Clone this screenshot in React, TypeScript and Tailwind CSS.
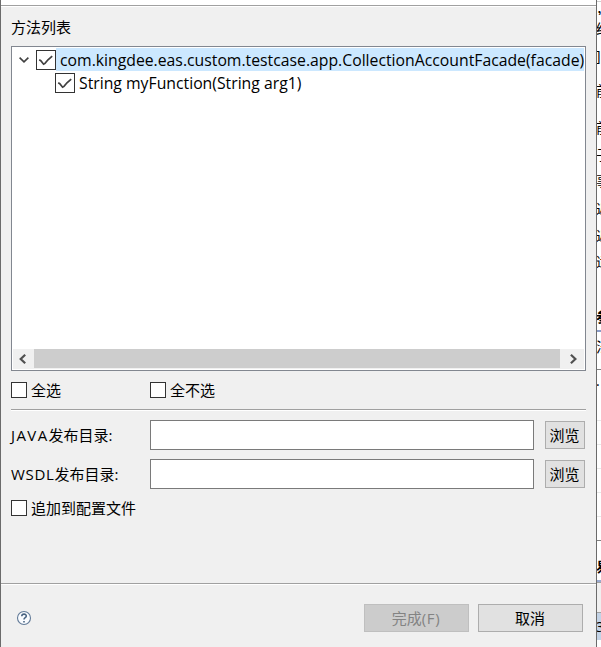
import { ReactNode } from 'react'

// what still shows of the editor window behind the dialog
const behindRows = [
    { box: "h-[14px] border-t border-[#d0d0d0] mt-px", text: "，" },
    { box: "h-[28px]", text: "结" },
    { box: "h-[26px]", text: "]" },
    { box: "h-[44px]", text: "前" },
    { box: "h-[30px]", text: "前" },
    { box: "h-[24px]", text: "子" },
    { box: "h-[28px]", text: "事" },
    { box: "h-[27px]", text: "返" },
    { box: "h-[27px]", text: "返" },
    { box: "h-[26px]", text: "适" },
    { box: "h-[57px] items-end pb-1.5 font-bold border-b-2 border-[#8a9cc8]", text: "参" },
    { box: "h-[38px] pb-2 border-b border-[#808080]", text: "法" },
    { box: "h-[51px] pb-5 border-b border-[#e8e8e8]", text: "·" },
    { box: "h-[24px] border-b border-[#e8e8e8]", text: "" },
    { box: "h-[24px] border-b border-[#e8e8e8]", text: "" },
    { box: "h-[24px] border-b border-[#e8e8e8]", text: "" },
    { box: "h-[24px] border-b border-[#e8e8e8]", text: "" },
    { box: "h-[24px] border-b border-[#808080]", text: "" },
    { box: "h-[41px] pt-3 font-bold border-b-2 border-[#9aaad0]", text: "易" },
    { box: "h-[31px] bg-[#f0f0f0] border-y border-[#a0a0a0]", text: "" },
    { box: "h-[27px] bg-[#c3d3e6]", text: "3" },
];

const CheckBox = ({ checked = false, large = false }: { checked?: boolean; large?: boolean }) => (
    <span className={`flex shrink-0 items-center justify-center border border-[#333] bg-white ${large ? "size-5" : "size-4"}`}>
        {checked && (
            <svg viewBox="0 0 18 18" className="size-[18px]" fill="none" stroke="#404040" strokeWidth="1.7">
                <path d="M2.2 8.8 3.8 9.7 6.6 13.2 8 12.4 11 8.8 15.2 5.2" />
            </svg>
        )}
    </span>
);

const Divider = ({ className = "" }: { className?: string }) => (
    <div className={`h-0.5 shrink-0 border-t border-[#a0a0a0] bg-white ${className}`} />
);

const PathField = ({ label }: { label: ReactNode }) => (
    <div className="flex h-[30px] items-center">
        <label className="w-[139px]">{label}</label>
        <input className="h-[30px] w-[384px] border border-[#7a7a7a] bg-white px-1 outline-none" />
        <button className="ml-[11px] h-7 w-10 border border-[#adadad] bg-[#e1e1e1] pr-px">浏览</button>
    </div>
);

const App = () => {
    return (
        <div className="flex h-[647px] w-[601px] overflow-hidden bg-white font-['Open_Sans','Noto_Sans_CJK_SC',sans-serif] text-[15px] leading-5 text-black">
            {/* DIALOG */}
            <div className="flex w-[597px] shrink-0 flex-col border-x border-[#6b6b6b] bg-[#f0f0f0]">
                <div className="h-[5px] bg-white" />
                <Divider />

                <div className="px-2.5">
                    <h1 className="mt-2.5 h-[29px]">方法列表</h1>

                    {/* Method tree */}
                    <div className="flex h-[325px] w-[575px] flex-col border border-[#828790] bg-white p-px text-[15.77px]">
                        <div className="flex h-[23px] items-center">
                            <svg viewBox="0 0 10 6" className="ml-1.5 mr-[7px] h-1.5 w-2.5 shrink-0" fill="none" stroke="#404040" strokeWidth="1.6">
                                <path d="M.6.7 5 4.9 9.4.7" />
                            </svg>
                            <CheckBox checked large />
                            <span className="flex h-full flex-1 items-center overflow-hidden whitespace-nowrap bg-[#cce8ff] pl-1">
                                com.kingdee.eas.custom.testcase.app.CollectionAccountFacade(facade)
                            </span>
                        </div>
                        <div className="flex h-[23px] items-center gap-1 pl-[42px]">
                            <CheckBox checked large />
                            <span>String myFunction(String arg1)</span>
                        </div>

                        {/* Scrollbar */}
                        <div className="mt-auto flex h-5 items-center bg-[#f0f0f0]">
                            <svg viewBox="0 0 21 19" className="h-[19px] w-[21px]" fill="none" stroke="#505050" strokeWidth="2.2">
                                <path d="M12.2 4.7 7.7 9 12.2 13.3" />
                            </svg>
                            <div className="mb-px h-[19px] flex-1 bg-[#cdcdcd]" />
                            <svg viewBox="0 0 24 19" className="h-[19px] w-6" fill="none" stroke="#505050" strokeWidth="2.2">
                                <path d="M10.9 4.7 15.4 9 10.9 13.3" />
                            </svg>
                        </div>
                    </div>

                    <div className="mt-[11px] flex h-4 items-center">
                        <label className="flex w-[139px] items-center gap-1"><CheckBox />全选</label>
                        <label className="flex items-center gap-1"><CheckBox />全不选</label>
                    </div>
                    <Divider className="mt-[11px] w-[575px]" />

                    {/* Output folders */}
                    <div className="mt-[9px] flex flex-col gap-[9px]">
                        <PathField label={<><span className="tracking-[1.4px] [font-kerning:none]">JAVA</span>发布目录:</>} />
                        <PathField label={<><span className="tracking-[0.7px]">WSDL</span>发布目录:</>} />
                    </div>
                    <label className="mt-[11px] flex h-4 items-center gap-1"><CheckBox />追加到配置文件</label>
                </div>

                {/* Footer */}
                <Divider className="mt-auto" />
                <div className="flex h-[62px] shrink-0 items-start pl-[15px] pr-[13px] pt-[19px]">
                    <svg viewBox="0 0 16 16" className="mt-1.5 size-4" fill="none">
                        <circle cx="8" cy="8" r="6.5" fill="#fafcff" stroke="#637b98" strokeWidth="1.1" />
                        <path d="M5.8 6.3C5.8 3.4 10.3 3.5 10.3 6.1 10.3 7.7 8 7.7 8 9.5M8 10.9v1.5" stroke="#496482" strokeWidth="1.6" />
                    </svg>
                    <button className="ml-auto h-7 w-[105px] border border-[#bfbfbf] bg-[#ccc] pr-px text-[#838383]">完成<span className="tracking-[0.6px]">(F)</span></button>
                    <button className="ml-[9px] h-7 w-[105px] border border-[#adadad] bg-[#e1e1e1] pr-px">取消</button>
                </div>
            </div>

            {/* Window behind */}
            <div className="flex w-1 shrink-0 flex-col overflow-hidden">
                {behindRows.map(({ box, text }, i) => (
                    <div key={i} className={`flex shrink-0 items-center overflow-hidden text-[14px] leading-none ${box}`}>
                        <span className="-ml-px whitespace-nowrap">{text}</span>
                    </div>
                ))}
            </div>
        </div>
    );
};

export default App;
